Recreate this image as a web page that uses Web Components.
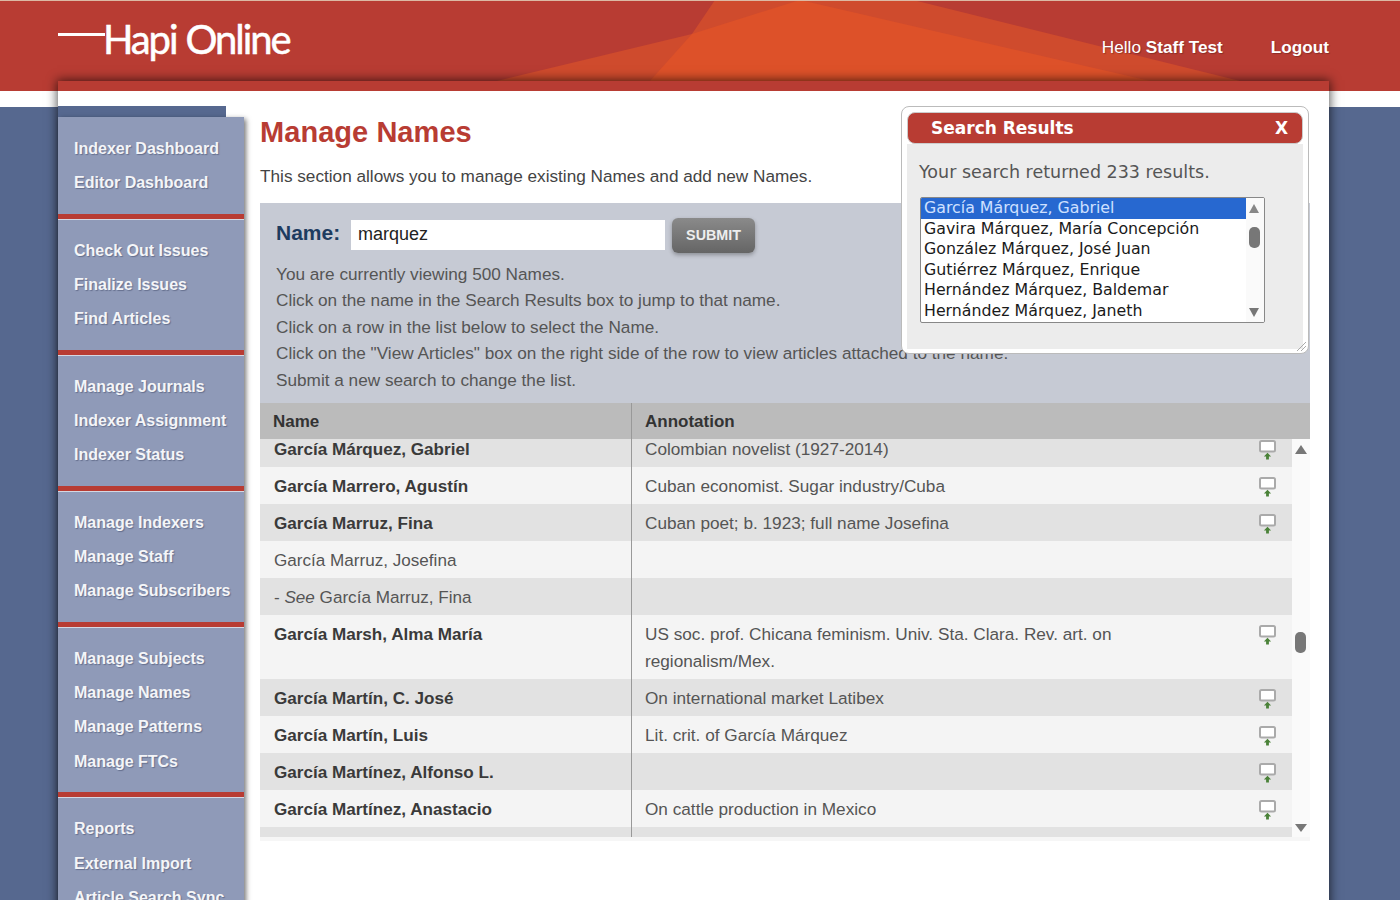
<!DOCTYPE html>
<html lang="en">
<head>
<meta charset="utf-8">
<title>Hapi Online - Manage Names</title>
<style>
  html, body { margin: 0; height: 900px; overflow: hidden; }
  body {
    font-family: "Liberation Sans", Arial, sans-serif;
    background: linear-gradient(#fff 0, #fff 107px, #56688f 107px);
  }
</style>
</head>
<body>
<hapi-header></hapi-header>
<hapi-page>
  <hapi-sidebar slot="side">
    <nav-group><a>Indexer Dashboard</a><a>Editor Dashboard</a></nav-group>
    <nav-group><a>Check Out Issues</a><a>Finalize Issues</a><a>Find Articles</a></nav-group>
    <nav-group><a>Manage Journals</a><a>Indexer Assignment</a><a>Indexer Status</a></nav-group>
    <nav-group><a>Manage Indexers</a><a>Manage Staff</a><a>Manage Subscribers</a></nav-group>
    <nav-group><a>Manage Subjects</a><a>Manage Names</a><a>Manage Patterns</a><a>Manage FTCs</a></nav-group>
    <nav-group last><a>Reports</a><a>External Import</a><a>Article Search Sync</a></nav-group>
  </hapi-sidebar>
  <search-panel></search-panel>
  <names-table>
    <name-row name="García Márquez, Gabriel" note="Colombian novelist (1927-2014)" style="margin-top:-9px"></name-row>
    <name-row name="García Marrero, Agustín" note="Cuban economist. Sugar industry/Cuba"></name-row>
    <name-row name="García Marruz, Fina" note="Cuban poet; b. 1923; full name Josefina"></name-row>
    <name-row plain name="García Marruz, Josefina"></name-row>
    <name-row plain see="García Marruz, Fina"></name-row>
    <name-row name="García Marsh, Alma María" note="US soc. prof. Chicana feminism. Univ. Sta. Clara. Rev. art. on regionalism/Mex."></name-row>
    <name-row name="García Martín, C. José" note="On international market Latibex"></name-row>
    <name-row name="García Martín, Luis" note="Lit. crit. of García Márquez"></name-row>
    <name-row name="García Martínez, Alfonso L."></name-row>
    <name-row name="García Martínez, Anastacio" note="On cattle production in Mexico"></name-row>
    <name-row plain></name-row>
  </names-table>
  <results-popup slot="over"></results-popup>
</hapi-page>

<script>
function define(tag, html, Base) {
  customElements.define(tag, class extends (Base || HTMLElement) {
    constructor() {
      super();
      const template = document.createElement('template');
      template.innerHTML = html;
      this.attachShadow({ mode: 'open' }).appendChild(template.content.cloneNode(true));
    }
  });
}

define('hapi-header', `
  <style>
    :host { display: flex; justify-content: space-between; align-items: flex-start; position: relative;
      height: 90px; border-top: 1px solid #dcb9a4; box-sizing: content-box; background: #b83c33; color: #fff; overflow: hidden; }
    svg { position: absolute; left: 0; top: 0; }
    .logo { position: relative; display: flex; align-items: flex-start; margin: 16px 0 0 58px; }
    .line { width: 47px; height: 3px; margin-top: 16px; background: #fff; }
    .word { font: 400 40px/44px Lato, sans-serif; letter-spacing: -2.1px; word-spacing: 1px; margin-left: -2px; -webkit-text-stroke: .5px #fff; }
    .user { position: relative; display: flex; margin: 37px 71px 0 0; font-size: 17.2px; line-height: 18px; text-shadow: 1px 1px 1px rgba(0,0,0,.25); }
    b.logout { margin-left: 48px; font-size: 17.2px; }
  </style>
  <svg width="1400" height="90"><polygon points="497,80 692,33 715,-1 913,-1 1240,80" fill="#cf4b2d"/><polygon points="650,80 692,33 800,-1 1150,80" fill="#dd5129"/></svg>
  <div class="logo"><div class="line"></div><div class="word">Hapi Online</div></div>
  <div class="user"><span>Hello <b>Staff Test</b></span><b class="logout">Logout</b></div>
`);

define('hapi-page', `
  <style>
    :host { display: block; position: relative; width: 1271px; height: 830px; margin: -10px 0 0 58px;
      background: linear-gradient(#b83c33 0, #b83c33 10px, #fff 10px); box-shadow: 0 0 10px 1px rgba(0,0,0,.65); }
    .cols { display: flex; padding-top: 25px; }
    .main { width: 1050px; margin-left: 16px; }
    h1 { margin: 0; padding-top: 9px; font-size: 29px; line-height: 34px; color: #b83c33; letter-spacing: .05px; }
    p { margin: 0; padding: 15px 0 15px; font-size: 17.2px; line-height: 24px; color: #444; }
  </style>
  <div class="cols">
    <slot name="side"></slot>
    <div class="main">
      <h1>Manage Names</h1>
      <p>This section allows you to manage existing Names and add new Names.</p>
      <slot></slot>
    </div>
  </div>
  <slot name="over"></slot>
`);

define('hapi-sidebar', `
  <style>
    :host { display: block; width: 186px; flex: none; }
    .tab { width: 168px; height: 11px; background: #56688f; }
    .body { padding-top: .7px; background: #8f9ab8; box-shadow: 2px 2px 5px rgba(0,0,0,.55); }
  </style>
  <div class="tab"></div>
  <div class="body"><slot></slot></div>
`);

define('nav-group', `
  <style>
    :host { display: block; padding: 14.2px 0 13.3px; border-bottom: 5px solid #b83c33; box-shadow: 0 1px 0 #d5d8e2; margin-bottom: 1px; }
    :host([last]) { border: 0; box-shadow: none; margin: 0; padding-bottom: 40px; }
    ::slotted(a) { display: block; padding-left: 16px; font-size: 16px; font-weight: bold; line-height: 34.2px; color: #f4f5f8; text-shadow: 1px 1px 1px rgba(50,60,90,.45); white-space: nowrap; }
  </style>
  <slot></slot>
`);

define('search-panel', `
  <style>
    :host { display: block; height: 200px; box-sizing: border-box; padding: 15px 16px 0; background: #c6cad4; color: #555; font-size: 17.2px; }
    .form { display: flex; align-items: center; height: 35px; margin-bottom: 8px; }
    label { font-size: 21px; font-weight: bold; color: #1d3c60; width: 75px; position: relative; top: -3px; }
    .input { width: 314px; height: 30px; box-sizing: border-box; background: #fff; padding-left: 7px; font-size: 18px; line-height: 28px; color: #222; position: relative; top: -1px; }
    .btn { width: 83px; height: 35px; margin-left: 7px; border-radius: 6px; background: linear-gradient(#8a8a8a, #656565); box-shadow: 0 2px 4px rgba(0,0,0,.3);
      color: #eee; font-size: 14.3px; font-weight: bold; line-height: 35px; text-align: center; }
    div.t { line-height: 26.4px; white-space: nowrap; }
  </style>
  <div class="form"><label>Name:</label><div class="input">marquez</div><div class="btn">SUBMIT</div></div>
  <div class="t">You are currently viewing 500 Names.</div>
  <div class="t">Click on the name in the Search Results box to jump to that name.</div>
  <div class="t">Click on a row in the list below to select the Name.</div>
  <div class="t">Click on the "View Articles" box on the right side of the row to view articles attached to the name.</div>
  <div class="t">Submit a new search to change the list.</div>
`);

define('names-table', `
  <style>
    :host { display: block; background: #f8f8f8; height: 438px; }
    .head { display: flex; height: 36px; background: #bbb; font-size: 17px; font-weight: bold; line-height: 37px; color: #333; }
    .head div:first-child { width: 358px; padding-left: 13px; border-right: 1px solid #999; }
    .head div:last-child { padding-left: 13px; }
    .wrap { display: flex; height: 398px; }
    .rows { width: 1032px; height: 398px; overflow: hidden; }
    .bar { flex: 1; position: relative; background: #fafafa; }
    .up, .down { position: absolute; left: 3px; width: 0; height: 0; border: 6px solid transparent; }
    .up { border-top: 0; border-bottom: 9px solid #777; top: 6px; }
    .down { top: 385px; border-bottom: 0; border-top: 8px solid #777; }
    .thumb { position: absolute; left: 3px; top: 193px; width: 11px; height: 21px; border-radius: 5px; background: #777; }
    .foot { height: 4px; background: #f6f6f6; }
    ::slotted(name-row:nth-child(odd)) { background: #e2e2e2; }
    ::slotted(name-row:nth-child(even)) { background: #f4f4f4; }
  </style>
  <div class="head"><div>Name</div><div>Annotation</div></div>
  <div class="wrap"><div class="rows"><slot></slot></div><div class="bar"><i class="up"></i><i class="thumb"></i><i class="down"></i></div></div>
  <div class="foot"></div>
`);

customElements.define('name-row', class extends HTMLElement {
  connectedCallback() {
    if (this.shadowRoot) return;
    const plain = this.hasAttribute('plain');
    const see = this.getAttribute('see');
    const name = this.getAttribute('name') || '';
    const note = this.getAttribute('note') || '';
    this.attachShadow({ mode: 'open' }).innerHTML = `
      <style>
        :host { display: grid; grid-template-columns: 372px 1fr 33px; font-size: 17.2px; line-height: 27px; color: #444; }
        .n, .a { padding: 6px 0 4px 14px; min-height: 27px; }
        .n { border-right: 1px solid #999; box-sizing: border-box; min-height: 37px; font-size: 17.1px; font-weight: bold; color: #3a3a3a; }
        .n.plain { font-weight: normal; color: #555; }
        .a { padding: 6px 20px 4px 13px; color: #555; }
        svg { display: block; margin: 10px 0 0 0; }
      </style>
      <div class="n ${plain ? 'plain' : ''}">${see ? '- <i>See</i> ' + see : name}</div>
      <div class="a">${note}</div>
      <div>${plain ? '' : `<svg width="18" height="20" viewBox="0 0 18 20"><rect x="1" y="1" width="15" height="10.5" rx="1.5" fill="#fff" stroke="#aaa" stroke-width="2"/><path d="M8.5 12.8l3.6 3.6h-2.2v3h-2.8v-3h-2.2z" fill="#4a8238"/></svg>`}</div>`;
  }
});

define('results-popup', `
  <style>
    :host { display: block; position: absolute; left: 843px; top: 25px; width: 408px; height: 248px; box-sizing: border-box;
      padding: 5px; background: #fff; border: 1px solid #bbb; border-radius: 8px; font-family: "DejaVu Sans", Verdana, sans-serif; }
    .title { display: flex; justify-content: space-between; height: 32px; box-sizing: border-box; padding: 0 14px 0 23px; border: 1px solid #ccc; border-radius: 8px; background: #b83c33; color: #fff;
      font-size: 17px; font-weight: bold; line-height: 31px; position: relative; }
    .body { height: 205px; box-sizing: border-box; padding: 16px 13px 0 13px; background: #ececec; color: #555; }
    .count { font-size: 17.5px; line-height: 24px; margin: 0 0 13px -1px; }
    .list { display: flex; width: 345px; height: 126px; box-sizing: border-box; border: 1px solid #888; border-radius: 2px; background: #fff; color: #1a1a1a; font-size: 15.8px; line-height: 20.5px; overflow: hidden; }
    .items { flex: 1; min-width: 0; }
    .items div { padding-left: 3px; white-space: nowrap; height: 20.5px; }
    .items .sel { background: #2768d0; color: #cfe0ff; }
    .sb { width: 18px; flex: none; position: relative; background: #fafafa; }
    .sb i { position: absolute; left: 3px; width: 0; height: 0; border: 5.5px solid transparent; }
    .sb .up { top: 6px; border-top: 0; border-bottom: 9px solid #888; }
    .sb .down { top: 110px; border-bottom: 0; border-top: 9px solid #777; }
    .sb .thumb { left: 3px; top: 29px; width: 11px; height: 21px; border: 0; border-radius: 5px; background: #777; }
    svg { position: absolute; right: 1px; bottom: 1px; }
  </style>
  <div class="title"><span>Search Results</span><span>X</span></div>
  <div class="body">
    <div class="count">Your search returned 233 results.</div>
    <div class="list">
      <div class="items">
        <div class="sel">García Márquez, Gabriel</div>
        <div>Gavira Márquez, María Concepción</div>
        <div>González Márquez, José Juan</div>
        <div>Gutiérrez Márquez, Enrique</div>
        <div>Hernández Márquez, Baldemar</div>
        <div>Hernández Márquez, Janeth</div>
      </div>
      <div class="sb"><i class="up"></i><i class="thumb"></i><i class="down"></i></div>
    </div>
  </div>
  <svg width="12" height="12"><path d="M2 11L11 2M6 11l5-5" stroke="#aaa" fill="none"/></svg>
`);
</script>
</body>
</html>
